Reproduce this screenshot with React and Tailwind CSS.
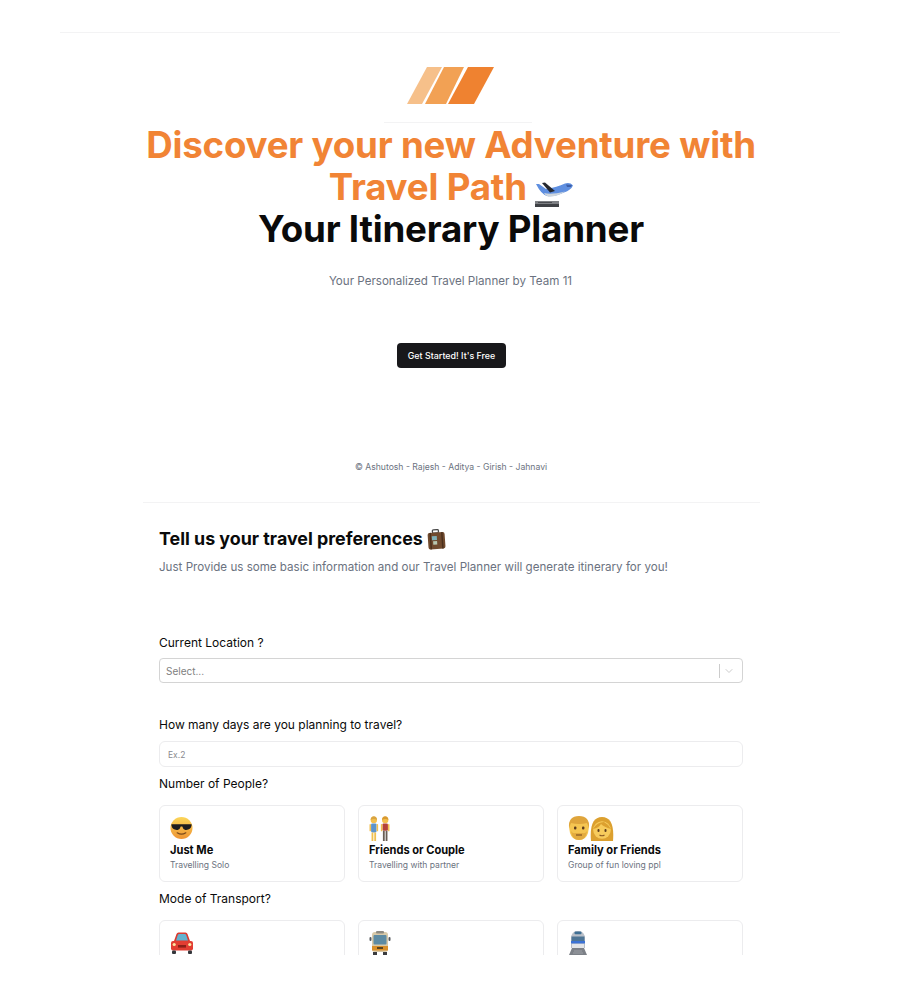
import { ChevronDown } from 'lucide-react';

const Plane = () => (
  <svg width="38" height="28" viewBox="0 0 38 28" className="inline-block align-[-8px]">
    {/* fuselage, nose to the right */}
    <path d="M1 4 L4 4 L11 9 Q22 7 30 3.5 Q35 2 38 5.5 Q36 10 29 12.5 Q20 17 12 16 Q6 14 1 4 Z" fill="#5f8fe0" />
    <path d="M9 13 Q16 15 30 11.5 Q22 17 13 16.5 Q10 15.5 9 13 Z" fill="#cfd6dc" />
    <path d="M7 3 L10 2.5 L20 11 L15 12.5 Z" fill="#24272e" />
    <path d="M31 4.5 L37 5 L36 7 L32 7 Z" fill="#3d5fa8" />
    <rect x="0" y="21" width="24" height="3" fill="#7d7f83" />
    <rect x="0" y="24" width="24" height="3" fill="#3f4145" />
    <rect x="3" y="22" width="14" height="1" fill="#4a4c50" />
  </svg>
);

const Suitcase = () => (
  <svg width="19" height="21" viewBox="0 0 19 21" className="inline-block">
    <g transform="rotate(-4 9 11)">
      <rect x="6" y="0.7" width="6" height="3.4" rx="1" fill="none" stroke="#4a4a4a" strokeWidth="1.3" />
      <rect x="1" y="3.5" width="17" height="16.5" rx="2" fill="#704a2e" />
      <rect x="3" y="3.5" width="1.4" height="16.5" fill="#4a2f1c" />
      <rect x="14.6" y="3.5" width="1.4" height="16.5" fill="#4a2f1c" />
      <rect x="5" y="7" width="5" height="4" fill="#7fb0b8" />
      <rect x="6" y="12" width="4" height="3.5" fill="#b7c6b0" />
    </g>
  </svg>
);

const Cool = () => (
  <svg width="23" height="24" viewBox="0 0 24 24">
    <defs>
      <linearGradient id="face" x1="0" y1="0" x2="0" y2="1">
        <stop offset="0" stopColor="#fbd659" />
        <stop offset="1" stopColor="#ee9433" />
      </linearGradient>
    </defs>
    <circle cx="12" cy="12" r="11.5" fill="url(#face)" />
    <path d="M1.5 8 H22.5 V9.5 Q21.5 14.5 16 14 Q13.5 13.5 12.8 10.5 H11.2 Q10.5 13.5 8 14 Q2.5 14.5 1.5 9.5 Z" fill="#1d1d1f" />
    <path d="M7.5 17 Q12 20 16.5 17" fill="none" stroke="#7a4a1c" strokeWidth="1.3" strokeLinecap="round" />
  </svg>
);

const Person = ({ x, hair, top, legs, skirt }) => (
  <g transform={`translate(${x} 0)`}>
    <circle cx="4" cy="3.5" r="2.8" fill="#f4c04e" />
    <path d="M1.2 3.5 Q1.5 0.2 4 0.3 Q6.5 0.2 6.8 3.5 Q4 1.6 1.2 3.5 Z" fill={hair} />
    <rect x="1.6" y="6.5" width="4.8" height={skirt ? 8 : 6.5} rx="1" fill={top} />
    <rect x="0.2" y="7" width="1.3" height="6.5" rx="0.6" fill="#f4c04e" />
    <rect x="6.5" y="7" width="1.3" height="6.5" rx="0.6" fill="#f4c04e" />
    <rect x="2" y={skirt ? 14.5 : 13} width="1.6" height={skirt ? 7.5 : 9} fill={legs} />
    <rect x="4.4" y={skirt ? 14.5 : 13} width="1.6" height={skirt ? 7.5 : 9} fill={legs} />
  </g>
);

const Couple = () => (
  <svg width="21" height="25" viewBox="0 0 18 22">
    <Person x={0} hair="#d9a441" top="#5d94cc" legs="#f0c050" skirt />
    <Person x={10} hair="#d99a2f" top="#b5413a" legs="#6a5f54" />
  </svg>
);

const Parents = () => (
  <svg width="46" height="25" viewBox="0 0 46 25">
    <path d="M1 11 Q1 1 11 1 Q21 1 21 11 L20 17 Q18 24 11 24 Q4 24 2 17 Z" fill="#f5c551" />
    <path d="M1 12 Q0 0 11 0 Q22 0 21 12 L19 7 Q11 9 3 7 Z" fill="#dfa53c" />
    <path d="M3 15 Q4 24 11 24 Q18 24 19 15 Q17 18 15 17 H7 Q5 18 3 15 Z" fill="#e3ab3f" />
    <rect x="6" y="10.5" width="2.4" height="3" rx="1" fill="#5b3a1c" />
    <rect x="14" y="10.5" width="2.4" height="3" rx="1" fill="#5b3a1c" />
    <path d="M8 19 H14" stroke="#8a5a24" strokeWidth="1.3" />
    <path d="M23 25 Q21 1 34 1 Q47 1 45 25 Z" fill="#dca02f" />
    <circle cx="34" cy="14" r="8.8" fill="#f7cb5c" />
    <path d="M25 13 Q29 6 36 6 Q40 8 43 13 Q36 11 33 8 Q31 12 25 13 Z" fill="#dca02f" />
    <rect x="29.5" y="13" width="2" height="3" rx="1" fill="#5b3a1c" />
    <rect x="36.5" y="13" width="2" height="3" rx="1" fill="#5b3a1c" />
    <path d="M31.5 19 Q34 20.5 36.5 19" fill="none" stroke="#8a5a24" strokeWidth="1.1" />
  </svg>
);

const Car = () => (
  <svg width="24" height="24" viewBox="0 0 24 24">
    <path d="M4 10 L6.5 3 Q7 1.5 8.5 1.5 H15.5 Q17 1.5 17.5 3 L20 10 Z" fill="#d93a30" />
    <path d="M6 9.5 L7.8 4 Q8.2 3 9.2 3 H14.8 Q15.8 3 16.2 4 L18 9.5 Z" fill="#63b2cf" />
    <rect x="1" y="10" width="22" height="9.5" rx="2" fill="#e23d32" />
    <rect x="8" y="14" width="8" height="2.6" fill="#8d2019" />
    <circle cx="4.2" cy="13.5" r="1.6" fill="#fbe6a2" />
    <circle cx="19.8" cy="13.5" r="1.6" fill="#fbe6a2" />
    <rect x="2" y="19.5" width="4" height="3.5" rx="1" fill="#33363b" />
    <rect x="18" y="19.5" width="4" height="3.5" rx="1" fill="#33363b" />
  </svg>
);

const Bus = () => (
  <svg width="22" height="24" viewBox="0 0 22 24">
    <rect x="3" y="1" width="16" height="20" rx="3" fill="#d8c9a8" />
    <rect x="7" y="0" width="8" height="2.4" rx="1" fill="#8d8a82" />
    <rect x="4.5" y="4" width="13" height="9.5" rx="1" fill="#5d8ba3" />
    <rect x="3" y="15" width="16" height="4.5" fill="#d9902a" />
    <rect x="8" y="16" width="6" height="2" fill="#5b4420" />
    <rect x="0.5" y="6" width="2" height="4" rx="1" fill="#55585c" />
    <rect x="19.5" y="6" width="2" height="4" rx="1" fill="#55585c" />
    <rect x="4" y="21" width="4" height="3" fill="#3a3c40" />
    <rect x="14" y="21" width="4" height="3" fill="#3a3c40" />
  </svg>
);

const Train = () => (
  <svg width="20" height="24" viewBox="0 0 20 24">
    <path d="M3 17 V8 Q3 0 10 0 Q17 0 17 8 V17 Z" fill="#b9bfc8" />
    <rect x="6.5" y="0.6" width="7" height="2.6" rx="1" fill="#3f6f94" />
    <path d="M3.5 5.5 H16.5 V10 H3.5 Z" fill="#4e7595" />
    <rect x="3" y="10" width="14" height="2.4" fill="#3b72d6" />
    <rect x="4" y="13" width="12" height="4" fill="#e3e5e8" />
    <path d="M4 17 H16 L19 24 H1 Z" fill="#7c8087" />
    <path d="M6 20 H14 M5 22 H15" stroke="#a3a7ad" strokeWidth="0.8" />
  </svg>
);

const people = [
  { icon: <Cool />, title: 'Just Me', desc: 'Travelling Solo' },
  { icon: <Couple />, title: 'Friends or Couple', desc: 'Travelling with partner' },
  { icon: <Parents />, title: 'Family or Friends', desc: 'Group of fun loving ppl' },
];

// these three are cut off by the page fold, only the emoji shows
const transport = [
  { icon: <Car />, id: 'car' },
  { icon: <Bus />, id: 'bus' },
  { icon: <Train />, id: 'train' },
];

const OptionCard = ({ icon, title, desc }) => (
  <div className="h-[77px] rounded-md border border-[#ececee] px-[10px] pt-[10px]">
    <div className="flex h-[24px] items-center">{icon}</div>
    {title && <h3 className="mt-[1px] text-[11.1px] font-bold leading-[18px] text-[#0a0a0a]">{title}</h3>}
    {desc && <p className="text-[8.55px] leading-[12px] text-[#6b7280]">{desc}</p>}
  </div>
);

export default function App() {
  return (
    <div className="h-[994px] w-[900px] bg-white font-['Inter',sans-serif]">
      <div className="h-[955px] overflow-hidden pt-[32px]">
        <div className="mx-[60px] border-t border-[#f3f3f4]" />

        <section className="flex flex-col items-center">
          <svg width="87" height="37" viewBox="0 0 87 37" className="mt-[34px]">
            <polygon points="0,37 20,0 35,0 15,37" fill="#f6c08a" />
            <polygon points="18,37 37,0 57,0 39,37" fill="#f2a154" />
            <polygon points="41,37 61,0 87,0 67,37" fill="#ef8230" />
          </svg>
          <div className="ml-[16px] mt-[18px] h-px w-[148px] bg-[#f3f3f4]" />
          <h1 className="ml-[2px] mt-[1px] w-[640px] text-center text-[36.7px] font-bold leading-[42px] tracking-[-0.2px] text-[#0a0a0a]">
            <span className="text-[#f18435]">
              Discover your new Adventure with Travel Path <Plane />
            </span>
            <br />
            Your Itinerary Planner
          </h1>
          <p className="ml-[1px] mt-[21px] text-[11.6px] leading-[20px] text-[#6b7280]">Your Personalized Travel Planner by Team 11</p>
          <button className="ml-[3px] mt-[52px] h-[25px] w-[109px] rounded-[4px] bg-[#18181b] text-[8.9px] font-medium text-white">
            Get Started! It's Free
          </button>
          <p className="ml-[2px] mt-[92px] text-[8.65px] leading-[14px] text-[#6b7280]">© Ashutosh - Rajesh - Aditya - Girish - Jahnavi</p>
        </section>

        <div className="ml-[143px] mr-[140px] mt-[28px] border-t border-[#f3f3f4]" />

        <section className="ml-[159px] mr-[157px] pt-[23px]">
          <h2 className="flex items-center gap-[4px] text-[17.85px] font-bold leading-[26px] text-[#0a0a0a]">
            Tell us your travel preferences <Suitcase />
          </h2>
          <p className="mt-[5px] text-[11.6px] leading-[20px] text-[#6b7280]">
            Just Provide us some basic information and our Travel Planner will generate itinerary for you!
          </p>

          <label className="mt-[57px] block text-[12px] leading-[18px] text-[#0a0a0a]">Current Location ?</label>
          <div className="mt-[6px] flex h-[25px] items-center rounded-[4px] border border-[#d4d4d4] pl-[6px] pr-[4px]">
            <span className="flex-1 pt-px text-[10px] text-[#808080]">Select...</span>
            <span className="h-[14px] w-px bg-[#cccccc]" />
            <ChevronDown className="mx-[3px] h-[12px] w-[12px] text-[#cccccc]" />
          </div>

          <label className="mt-[33px] block text-[12px] leading-[18px] text-[#0a0a0a]">How many days are you planning to travel?</label>
          <input
            placeholder="Ex.2"
            className="mt-[7px] block h-[26px] w-full rounded-md border border-[#ececee] px-[8px] pt-px text-[8.5px] outline-none placeholder:text-[#8a8a8f]"
          />

          <label className="mt-[8px] block text-[12px] leading-[18px] text-[#0a0a0a]">Number of People?</label>
          <div className="mt-[12px] grid grid-cols-3 gap-[13px]">
            {people.map((item) => (
              <OptionCard key={item.title} {...item} />
            ))}
          </div>

          <label className="mt-[8px] block text-[12px] leading-[18px] text-[#0a0a0a]">Mode of Transport?</label>
          <div className="mt-[12px] grid grid-cols-3 gap-[13px]">
            {transport.map((item) => (
              <OptionCard key={item.id} icon={item.icon} />
            ))}
          </div>
        </section>
      </div>
    </div>
  );
}
